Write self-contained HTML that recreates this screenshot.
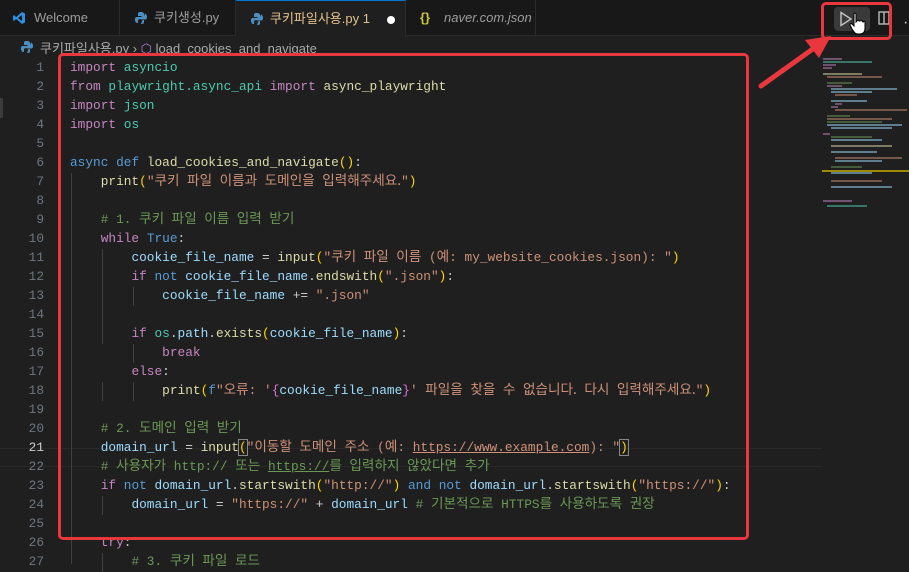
<!DOCTYPE html>
<html><head><meta charset="utf-8"><style>
*{margin:0;padding:0;box-sizing:border-box}
body{width:909px;height:564px;background:#1f1f1f;overflow:hidden;position:relative;font-family:"Liberation Sans","Noto Sans CJK KR",sans-serif;color:#ccc}
.tabs{position:absolute;left:0;top:0;width:909px;height:36px;background:#181818;border-bottom:1px solid #2b2b2b}
.tab{position:absolute;top:0;height:36px;border-right:1px solid #2b2b2b;font-size:13px;line-height:36px;color:#9d9d9d;padding-left:34px}
.tab.act{background:#1f1f1f;color:#e2c08d;border-top:1px solid #0078d4;height:37px}
.ic{position:absolute;left:12px;top:11px;width:14px;height:14px}
.bc{position:absolute;left:40px;top:38px;font-size:13px;color:#a9a9a9}
.code{position:absolute;left:0;top:58px;font-family:"Liberation Mono","Noto Sans CJK KR",monospace;font-size:12.8px;white-space:pre}
.ln{position:absolute;left:0;width:44px;text-align:right;color:#6e7681;height:19px;line-height:19px}
.l{position:absolute;left:70px;height:19px;line-height:19px;color:#ccc}
.k{font-family:"Noto Sans CJK KR",sans-serif;font-size:13.6px;line-height:10px;word-spacing:4.5px;font-style:normal}
.kw{color:#c586c0}.bl{color:#569cd6}.fn{color:#dcdcaa}.v{color:#9cdcfe}.m{color:#4ec9b0}.s{color:#ce9178}.c{color:#6a9955}.p{color:#ffd700}.q{color:#da70d6}
.guide{position:absolute;width:1px;background:#404040}
.red{position:absolute;border:3px solid #e8383d;border-radius:5px}
</style></head><body>
<div class="tabs">
 <div class="tab" style="left:0;width:120px"><svg class="ic" viewBox="0 0 14 14"><path d="M10 1 L13 2.5 V11.5 L10 13 L3 7 Z M10 4 L6 7 L10 10Z M1 5 L2 4 L5 7 L2 10 L1 9Z" fill="#2f8fe0"/></svg>Welcome</div>
 <div class="tab" style="left:120px;width:116px"><svg class="ic" style="left:14px" viewBox="0 0 14 14"><path d="M7 1C4 1 4 2 4 3V5H7.5V6H2.5C1 6 1 8 1 9S2 12 3 12H4V10C4 8.5 5 8 6 8H9C10 8 10 7 10 6V3C10 2 9 1 7 1Z" fill="#4a8ec2"/><path d="M7 13C10 13 10 12 10 11V9H6.5V8.5H11.5C13 8.5 13 6.5 13 5.5S12 2.5 11 2.5" fill="#4a8ec2"/></svg>쿠키생성.py</div>
 <div class="tab act" style="left:236px;width:170px"><svg class="ic" style="left:14px" viewBox="0 0 14 14"><path d="M7 1C4 1 4 2 4 3V5H7.5V6H2.5C1 6 1 8 1 9S2 12 3 12H4V10C4 8.5 5 8 6 8H9C10 8 10 7 10 6V3C10 2 9 1 7 1Z" fill="#4a8ec2"/><path d="M7 13C10 13 10 12 10 11V9H6.5V8.5H11.5C13 8.5 13 6.5 13 5.5S12 2.5 11 2.5" fill="#4a8ec2"/></svg>쿠키파일사용.py 1<span style="position:absolute;left:151px;top:15px;width:8px;height:8px;border-radius:50%;background:#fff"></span></div>
 <div class="tab" style="left:406px;width:130px;padding-left:38px;font-style:italic"><span style="position:absolute;left:14px;color:#cbcb41;font-style:normal;font-weight:bold">{}</span>naver.com.json</div>
 <div style="position:absolute;left:834px;top:7px;width:36px;height:24px;background:#3a3a3a;border-radius:4px"></div>
 <svg style="position:absolute;left:839px;top:11px" width="14" height="16" viewBox="0 0 14 16"><path d="M2 1.5 L12 8 L2 14.5Z" fill="none" stroke="#c5c5c5" stroke-width="1.4"/></svg>
 <svg style="position:absolute;left:849px;top:12px" width="18" height="24" viewBox="0 0 18 24"><path d="M5 2 C5 1 7 1 7 2 V10 L8 9 C8 8 10 8 10 9 L11 9 C11 8 13 8 13 9 L14 10 C14 9 16 9 16 10 V16 C16 20 14 22 11 22 H9 C6 22 5 20 3 17 L1 13 C1 12 2 11 3 12 L5 14 Z" fill="#fff" stroke="#000" stroke-width="1"/></svg>
 <svg style="position:absolute;left:878px;top:11px" width="12" height="14" viewBox="0 0 12 14"><rect x="1" y="1" width="10" height="12" fill="none" stroke="#c5c5c5" stroke-width="1.3"/><line x1="6" y1="1" x2="6" y2="13" stroke="#c5c5c5" stroke-width="1.3"/></svg>
 <span style="position:absolute;left:903px;top:14px;color:#ccc">·</span>
</div>
<div class="red" style="left:821px;top:2px;width:71px;height:38px"></div>
<svg style="position:absolute;left:755px;top:30px" width="80" height="65" viewBox="0 0 80 65"><line x1="6" y1="56" x2="62" y2="16" stroke="#e8383d" stroke-width="5" stroke-linecap="round"/><path d="M76 6 L50 10 L64 28 Z" fill="#e8383d"/></svg>
<div class="bc"><svg style="position:absolute;left:-20px;top:2px" width="14" height="14" viewBox="0 0 14 14"><path d="M7 1C4 1 4 2 4 3V5H7.5V6H2.5C1 6 1 8 1 9S2 12 3 12H4V10C4 8.5 5 8 6 8H9C10 8 10 7 10 6V3C10 2 9 1 7 1Z" fill="#4a8ec2"/><path d="M7 13C10 13 10 12 10 11V9H6.5V8.5H11.5C13 8.5 13 6.5 13 5.5S12 2.5 11 2.5" fill="#4a8ec2"/></svg>쿠키파일사용.py › <span style="color:#b180d7">⬡</span> load_cookies_and_navigate</div>
<div style="position:absolute;left:0;top:448px;width:822px;height:19px;border-top:1px solid #282828;border-bottom:1px solid #282828"></div>
<div style="position:absolute;left:0;top:98px;width:3px;height:20px;background:#3a3a3a"></div>
<div class="guide" style="left:71px;top:173px;height:391px"></div>
<div class="guide" style="left:102px;top:249px;height:95px"></div>
<div class="guide" style="left:102px;top:382px;height:19px"></div>
<div class="guide" style="left:133px;top:287px;height:19px"></div>
<div class="guide" style="left:133px;top:344px;height:19px"></div>
<div class="guide" style="left:133px;top:382px;height:19px"></div>
<div class="guide" style="left:102px;top:496px;height:19px"></div>
<div class="guide" style="left:102px;top:553px;height:19px"></div>
<div class="code">
<div class="ln" style="top:0">1</div><div class="l" style="top:0"><span class="kw">import</span> <span class="m">asyncio</span></div>
<div class="ln" style="top:19px">2</div><div class="l" style="top:19px"><span class="kw">from</span> <span class="m">playwright.async_api</span> <span class="kw">import</span> <span class="fn">async_playwright</span></div>
<div class="ln" style="top:38px">3</div><div class="l" style="top:38px"><span class="kw">import</span> <span class="m">json</span></div>
<div class="ln" style="top:57px">4</div><div class="l" style="top:57px"><span class="kw">import</span> <span class="m">os</span></div>
<div class="ln" style="top:76px">5</div>
<div class="ln" style="top:95px">6</div><div class="l" style="top:95px"><span class="bl">async</span> <span class="bl">def</span> <span class="fn">load_cookies_and_navigate</span><span class="p">()</span>:</div>
<div class="ln" style="top:114px">7</div><div class="l" style="top:114px">    <span class="fn">print</span><span class="p">(</span><span class="s">"<i class="k">쿠키 파일 이름과 도메인을 입력해주세요.</i>"</span><span class="p">)</span></div>
<div class="ln" style="top:133px">8</div>
<div class="ln" style="top:152px">9</div><div class="l" style="top:152px">    <span class="c"># 1. <i class="k">쿠키 파일 이름 입력 받기</i></span></div>
<div class="ln" style="top:171px">10</div><div class="l" style="top:171px">    <span class="kw">while</span> <span class="bl">True</span>:</div>
<div class="ln" style="top:190px">11</div><div class="l" style="top:190px">        <span class="v">cookie_file_name</span> = <span class="fn">input</span><span class="p">(</span><span class="s">"<i class="k">쿠키 파일 이름</i> (<i class="k">예</i>: my_website_cookies.json): "</span><span class="p">)</span></div>
<div class="ln" style="top:209px">12</div><div class="l" style="top:209px">        <span class="kw">if</span> <span class="bl">not</span> <span class="v">cookie_file_name</span>.<span class="fn">endswith</span><span class="p">(</span><span class="s">".json"</span><span class="p">)</span>:</div>
<div class="ln" style="top:228px">13</div><div class="l" style="top:228px">            <span class="v">cookie_file_name</span> += <span class="s">".json"</span></div>
<div class="ln" style="top:247px">14</div>
<div class="ln" style="top:266px">15</div><div class="l" style="top:266px">        <span class="kw">if</span> <span class="m">os</span>.<span class="v">path</span>.<span class="fn">exists</span><span class="p">(</span><span class="v">cookie_file_name</span><span class="p">)</span>:</div>
<div class="ln" style="top:285px">16</div><div class="l" style="top:285px">            <span class="kw">break</span></div>
<div class="ln" style="top:304px">17</div><div class="l" style="top:304px">        <span class="kw">else</span>:</div>
<div class="ln" style="top:323px">18</div><div class="l" style="top:323px">            <span class="fn">print</span><span class="p">(</span><span class="bl">f</span><span class="s">"<i class="k">오류</i>: '</span><span class="q">{</span><span class="v">cookie_file_name</span><span class="q">}</span><span class="s">' <i class="k">파일을 찾을 수 없습니다. 다시 입력해주세요.</i>"</span><span class="p">)</span></div>
<div class="ln" style="top:342px">19</div>
<div class="ln" style="top:361px">20</div><div class="l" style="top:361px">    <span class="c"># 2. <i class="k">도메인 입력 받기</i></span></div>
<div class="ln" style="top:380px;color:#ccc">21</div><div class="l" style="top:380px">    <span class="v">domain_url</span> = <span class="fn">input</span><span class="p" style="outline:1px solid #888">(</span><span class="s">"<i class="k">이동할 도메인 주소</i> (<i class="k">예</i>: <u>https://www.example.com</u>): "</span><span class="p" style="outline:1px solid #888">)</span></div>
<div class="ln" style="top:399px">22</div><div class="l" style="top:399px">    <span class="c"># <i class="k">사용자가</i> http:// <i class="k">또는</i> <u>https://</u><i class="k">를 입력하지 않았다면 추가</i></span></div>
<div class="ln" style="top:418px">23</div><div class="l" style="top:418px">    <span class="kw">if</span> <span class="bl">not</span> <span class="v">domain_url</span>.<span class="fn">startswith</span><span class="p">(</span><span class="s">"http://"</span><span class="p">)</span> <span class="bl">and</span> <span class="bl">not</span> <span class="v">domain_url</span>.<span class="fn">startswith</span><span class="p">(</span><span class="s">"https://"</span><span class="p">)</span>:</div>
<div class="ln" style="top:437px">24</div><div class="l" style="top:437px">        <span class="v">domain_url</span> = <span class="s">"https://"</span> + <span class="v">domain_url</span> <span class="c"># <i class="k">기본적으로</i> HTTPS<i class="k">를 사용하도록 권장</i></span></div>
<div class="ln" style="top:456px">25</div>
<div class="ln" style="top:475px">26</div><div class="l" style="top:475px">    <span class="kw">try</span>:</div>
<div class="ln" style="top:494px">27</div><div class="l" style="top:494px">        <span class="c"># 3. <i class="k">쿠키 파일 로드</i></span></div>
</div>
<div class="red" style="left:58px;top:53px;width:691px;height:487px"></div>
<svg style="position:absolute;left:822px;top:56px" width="87" height="160" viewBox="0 0 87 160">
<g stroke-width="1.2" opacity="0.8">
<line x1="1" y1="3" x2="20" y2="3" stroke="#c586c0"/><line x1="1" y1="6" x2="50" y2="6" stroke="#4ec9b0"/><line x1="1" y1="9" x2="14" y2="9" stroke="#c586c0"/><line x1="1" y1="12" x2="10" y2="12" stroke="#c586c0"/>
<line x1="1" y1="18" x2="40" y2="18" stroke="#dcdcaa"/><line x1="5" y1="21" x2="60" y2="21" stroke="#ce9178"/><line x1="5" y1="27" x2="30" y2="27" stroke="#6a9955"/><line x1="5" y1="30" x2="20" y2="30" stroke="#c586c0"/>
<line x1="9" y1="33" x2="75" y2="33" stroke="#9cdcfe"/><line x1="9" y1="36" x2="50" y2="36" stroke="#9cdcfe"/><line x1="13" y1="39" x2="35" y2="39" stroke="#ce9178"/>
<line x1="9" y1="45" x2="45" y2="45" stroke="#9cdcfe"/><line x1="13" y1="48" x2="20" y2="48" stroke="#c586c0"/><line x1="9" y1="51" x2="16" y2="51" stroke="#c586c0"/><line x1="13" y1="54" x2="85" y2="54" stroke="#ce9178"/>
<line x1="5" y1="60" x2="28" y2="60" stroke="#6a9955"/><line x1="5" y1="63" x2="70" y2="63" stroke="#ce9178"/><line x1="5" y1="66" x2="60" y2="66" stroke="#6a9955"/><line x1="5" y1="69" x2="80" y2="69" stroke="#9cdcfe"/><line x1="9" y1="72" x2="70" y2="72" stroke="#9cdcfe"/>
<line x1="1" y1="78" x2="8" y2="78" stroke="#c586c0"/><line x1="9" y1="81" x2="50" y2="81" stroke="#6a9955"/><line x1="9" y1="84" x2="60" y2="84" stroke="#9cdcfe"/><line x1="9" y1="90" x2="70" y2="90" stroke="#dcdcaa"/><line x1="9" y1="96" x2="55" y2="96" stroke="#9cdcfe"/>
<line x1="13" y1="102" x2="80" y2="102" stroke="#ce9178"/><line x1="13" y1="105" x2="60" y2="105" stroke="#9cdcfe"/><line x1="9" y1="111" x2="40" y2="111" stroke="#6a9955"/><line x1="9" y1="117" x2="50" y2="117" stroke="#9cdcfe"/>
<line x1="9" y1="125" x2="60" y2="125" stroke="#ce9178"/><line x1="9" y1="131" x2="70" y2="131" stroke="#9cdcfe"/><line x1="1" y1="145" x2="30" y2="145" stroke="#c586c0"/><line x1="5" y1="150" x2="45" y2="150" stroke="#4ec9b0"/>
</g><rect x="0" y="114" width="87" height="2" fill="#a08a00"/></svg>
</body></html>
